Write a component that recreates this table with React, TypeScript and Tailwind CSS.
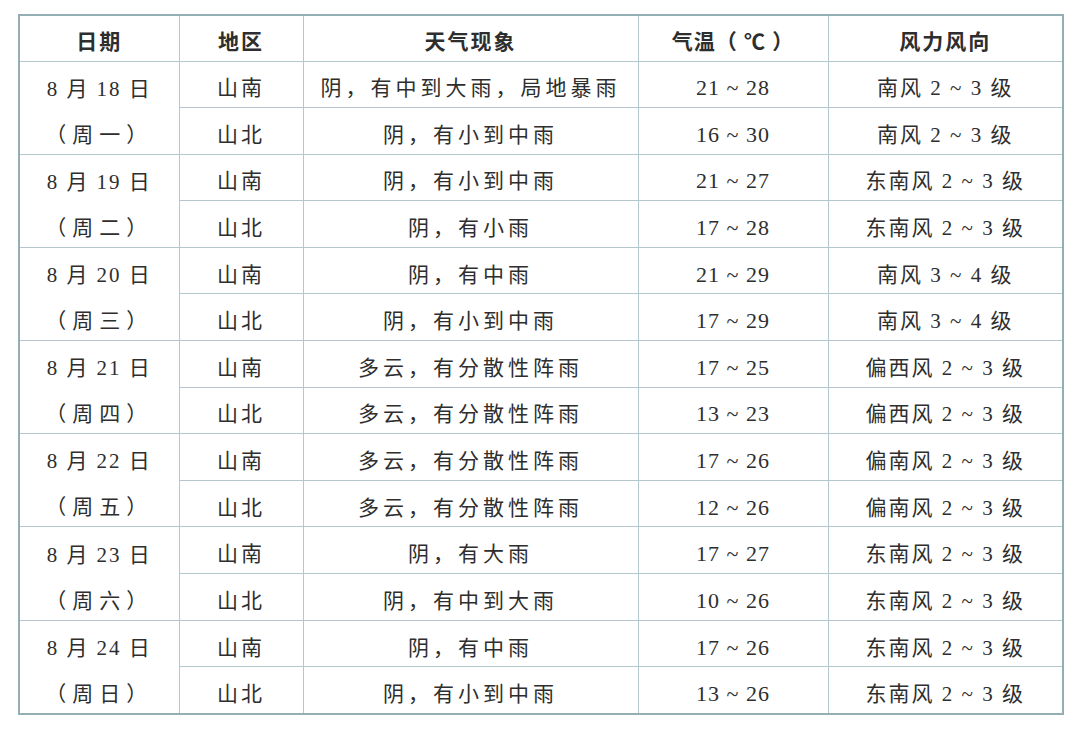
const days = [
  {
    date: '8 月 18 日',
    week: '（周一）',
    rows: [
      ['山南', '阴，有中到大雨，局地暴雨', '21 ~ 28', '南风 2 ~ 3 级'],
      ['山北', '阴，有小到中雨', '16 ~ 30', '南风 2 ~ 3 级'],
    ],
  },
  {
    date: '8 月 19 日',
    week: '（周二）',
    rows: [
      ['山南', '阴，有小到中雨', '21 ~ 27', '东南风 2 ~ 3 级'],
      ['山北', '阴，有小雨', '17 ~ 28', '东南风 2 ~ 3 级'],
    ],
  },
  {
    date: '8 月 20 日',
    week: '（周三）',
    rows: [
      ['山南', '阴，有中雨', '21 ~ 29', '南风 3 ~ 4 级'],
      ['山北', '阴，有小到中雨', '17 ~ 29', '南风 3 ~ 4 级'],
    ],
  },
  {
    date: '8 月 21 日',
    week: '（周四）',
    rows: [
      ['山南', '多云，有分散性阵雨', '17 ~ 25', '偏西风 2 ~ 3 级'],
      ['山北', '多云，有分散性阵雨', '13 ~ 23', '偏西风 2 ~ 3 级'],
    ],
  },
  {
    date: '8 月 22 日',
    week: '（周五）',
    rows: [
      ['山南', '多云，有分散性阵雨', '17 ~ 26', '偏南风 2 ~ 3 级'],
      ['山北', '多云，有分散性阵雨', '12 ~ 26', '偏南风 2 ~ 3 级'],
    ],
  },
  {
    date: '8 月 23 日',
    week: '（周六）',
    rows: [
      ['山南', '阴，有大雨', '17 ~ 27', '东南风 2 ~ 3 级'],
      ['山北', '阴，有中到大雨', '10 ~ 26', '东南风 2 ~ 3 级'],
    ],
  },
  {
    date: '8 月 24 日',
    week: '（周日）',
    rows: [
      ['山南', '阴，有中雨', '17 ~ 26', '东南风 2 ~ 3 级'],
      ['山北', '阴，有小到中雨', '13 ~ 26', '东南风 2 ~ 3 级'],
    ],
  },
];

const cell = 'border border-[#b3c7cd] p-0 pt-[8px] text-center align-middle leading-[28px]';

export default function App() {
  return (
    <div className="w-[1080px] h-[733px] bg-white pt-[14px] pl-[18px] text-[21px] text-[#2e2e2e] font-['Liberation_Serif','Noto_Sans_CJK_SC',serif]">
      <table className="table-fixed border-collapse border-2 border-[#93aeb5] w-[1044px]">
        <colgroup>
          <col className="w-[160px]" />
          <col className="w-[124px]" />
          <col className="w-[335px]" />
          <col className="w-[190px]" />
          <col className="w-[235px]" />
        </colgroup>
        <thead>
          <tr className="h-[46px]">
            <th className={`${cell} font-semibold tracking-[2px]`}>日期</th>
            <th className={`${cell} font-semibold tracking-[2px]`}>地区</th>
            <th className={`${cell} font-semibold tracking-[2px]`}>天气现象</th>
            <th className={`${cell} font-semibold tracking-[1px]`}>气温（ ℃ ）</th>
            <th className={`${cell} font-semibold tracking-[2px]`}>风力风向</th>
          </tr>
        </thead>
        <tbody>
          {days.map((d) =>
            d.rows.map((r, i) => (
              <tr key={d.date + i} className="h-[46.6px]">
                {i === 0 && (
                  <td rowSpan={2} className="border border-[#b3c7cd] p-0 text-center align-middle leading-[28px]">
                    <div className="flex h-[46px] items-center justify-center pt-[8px] tracking-[2px]">{d.date}</div>
                    <div className="flex h-[46px] items-center justify-center pt-[8px] tracking-[6px]">{d.week}</div>
                  </td>
                )}
                <td className={`${cell} tracking-[3px]`}>{r[0]}</td>
                <td className={`${cell} tracking-[4px]`}>{r[1]}</td>
                <td className={`${cell} tracking-[1px] text-[22px]`}>{r[2]}</td>
                <td className={`${cell} tracking-[2px]`}>{r[3]}</td>
              </tr>
            ))
          )}
        </tbody>
      </table>
    </div>
  );
}
